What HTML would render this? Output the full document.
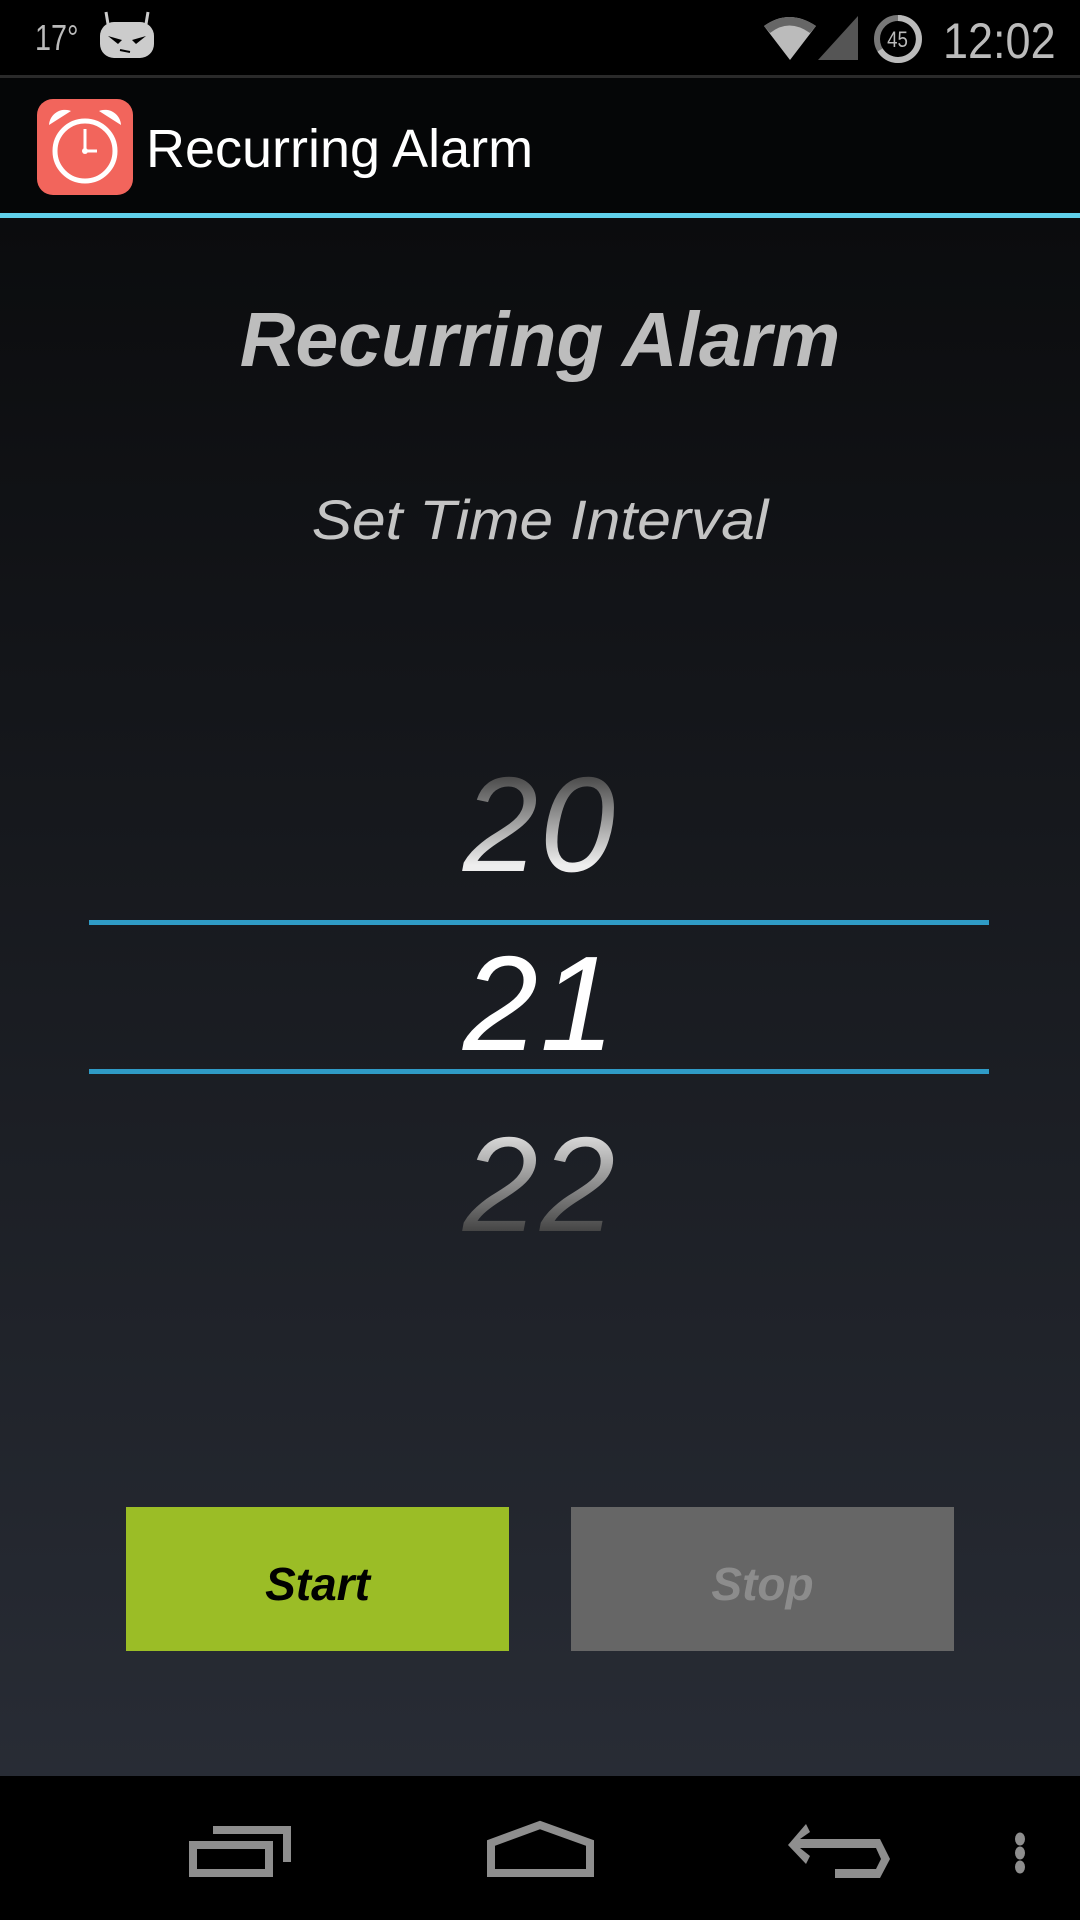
<!DOCTYPE html>
<html><head><meta charset="utf-8"><style>
*{margin:0;padding:0;box-sizing:border-box}
body{width:1080px;height:1920px;position:relative;overflow:hidden;background:#000;font-family:"Liberation Sans",sans-serif}
.abs{position:absolute}
#main{position:absolute;left:0;top:218px;width:1080px;height:1558px;background:linear-gradient(#0b0c0e,#282c35)}
.t{position:absolute;white-space:nowrap;line-height:1}
.num{position:absolute;left:0;width:1080px;text-align:center;font-size:135px;font-style:italic;line-height:1;letter-spacing:2px}
.g{background-clip:text;-webkit-background-clip:text;color:transparent}
</style></head><body>
<!-- status bar -->
<div class="t" style="left:35px;top:20px;font-size:36px;color:#bbb;transform:scaleX(.8);transform-origin:left">17°</div>
<svg class="abs" style="left:98px;top:10px" width="58" height="50" viewBox="0 0 58 50">
<path d="M8 2 L10 14 M50 2 L48 14" stroke="#ccc" stroke-width="3"/>
<rect x="2" y="12" width="54" height="36" rx="14" fill="#ccc"/>
<path d="M10 26 L24 30 L20 34 Z M48 26 L34 30 L38 34 Z" fill="#000"/>
<path d="M22 40 L32 42" stroke="#000" stroke-width="2"/>
</svg>
<svg class="abs" style="left:762px;top:14px" width="100" height="48" viewBox="0 0 100 48">
<path d="M2 12 Q27 -6 54 12 L28 46 Z" fill="#bbb"/>
<path d="M2 12 Q27 -6 54 12 L48 19 Q27 4 8 19 Z" fill="#666"/>
<path d="M96 2 L96 46 L56 46 Z" fill="#555"/>
</svg>
<svg class="abs" style="left:872px;top:14px" width="52" height="50" viewBox="0 0 52 50">
<circle cx="26" cy="25" r="21" fill="none" stroke="#777" stroke-width="6"/>
<path d="M26 4 A21 21 0 1 1 8 36" fill="none" stroke="#bbb" stroke-width="6"/>
<text x="26" y="33" font-size="22" fill="#bbb" text-anchor="middle" font-family="Liberation Sans" transform="scale(.85 1) translate(4 0)">45</text>
</svg>
<div class="t" style="left:943px;top:16px;font-size:50px;color:#bbb;transform:scaleX(.9);transform-origin:left">12:02</div>
<div class="abs" style="left:0;top:75px;width:1080px;height:3px;background:#2a2a2a"></div>
<!-- app bar -->
<div class="abs" style="left:0;top:78px;width:1080px;height:135px;background:#050607"></div>
<svg class="abs" style="left:37px;top:99px" width="96" height="96" viewBox="0 0 96 96">
<rect width="96" height="96" rx="16" fill="#f2655c"/>
<circle cx="48" cy="52" r="30" fill="none" stroke="#fff" stroke-width="5"/>
<path d="M12 26 A16 16 0 0 1 34 12 Z M84 26 A16 16 0 0 0 62 12 Z" fill="#fff"/>
<path d="M48 30 V52 H60" stroke="#fff" stroke-width="3" fill="none"/>
<circle cx="48" cy="52" r="3" fill="#fff"/>
</svg>
<div class="t" style="left:146px;top:122px;font-size:54px;color:#fff">Recurring Alarm</div>
<div class="abs" style="left:0;top:213px;width:1080px;height:5px;background:#60d0ea"></div>
<div id="main"></div>
<div class="t" style="left:0;width:1080px;text-align:center;top:302px;font-size:77px;font-weight:bold;font-style:italic;color:#bdbdbd">Recurring Alarm</div>
<div class="t" style="left:0;width:1080px;text-align:center;top:492px;font-size:56px;font-style:italic;color:#c4c4c4;transform:scaleX(1.08)">Set Time Interval</div>
<div class="num g" style="top:757px;background-image:linear-gradient(#444 12%,#eee 80%)">20</div>
<div class="abs" style="left:89px;top:920px;width:900px;height:5px;background:#2f9bc6"></div>
<div class="num" style="top:936px;color:#fff">21</div>
<div class="abs" style="left:89px;top:1069px;width:900px;height:5px;background:#2f9bc6"></div>
<div class="num g" style="top:1117px;background-image:linear-gradient(#ddd 12%,#444 85%)">22</div>
<div class="abs" style="left:126px;top:1507px;width:383px;height:144px;background:#9bbd26"></div>
<div class="t" style="left:126px;width:383px;text-align:center;top:1561px;font-size:46px;font-weight:bold;font-style:italic;color:#000">Start</div>
<div class="abs" style="left:571px;top:1507px;width:383px;height:144px;background:#666"></div>
<div class="t" style="left:571px;width:383px;text-align:center;top:1561px;font-size:46px;font-weight:bold;font-style:italic;color:#8c8c8c">Stop</div>
<!-- nav bar -->
<svg class="abs" style="left:0;top:1776px" width="1080" height="144" viewBox="0 0 1080 144">
<g fill="none" stroke="#8e8e8e" stroke-width="8">
<rect x="193" y="69" width="76" height="28"/>
<path d="M213 54 H287 V86"/>
<path d="M491 97 V67 L540 49 L590 67 V97 Z"/>
</g>
<path d="M806 48 L788 69 L806 88 L810 80 L800 72 H876 L881 83 L876 93 H835 V102 H880 L890 83 L880 63 H800 L810 56 Z" fill="#8e8e8e"/>
<ellipse cx="1020" cy="63" rx="5" ry="6.5" fill="#8e8e8e"/>
<ellipse cx="1020" cy="77" rx="5" ry="6.5" fill="#8e8e8e"/>
<ellipse cx="1020" cy="91" rx="5" ry="6.5" fill="#8e8e8e"/>
</svg>
</body></html>
